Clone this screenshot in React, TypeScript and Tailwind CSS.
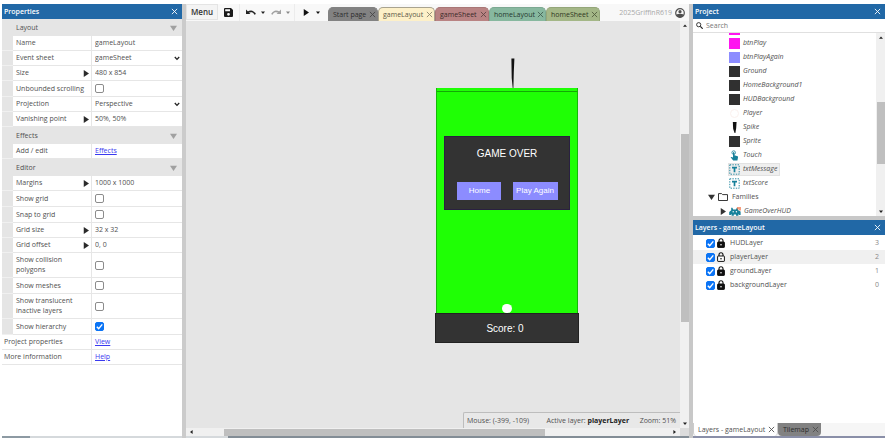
import React from "react";

function CloseIcon({ className = "" }: { className?: string }) {
  return (
    <svg viewBox="0 0 8 8" className={`h-[7px] w-[7px] shrink-0 ${className}`} fill="none" stroke="currentColor" strokeWidth="1">
      <path d="M1 1l6 6M7 1L1 7" />
    </svg>
  );
}

function Triangle({ dir, className = "" }: { dir: "right" | "down" | "left" | "up"; className?: string }) {
  const d = {
    right: "M1 0L8 4L1 8Z",
    down: "M0 1L8 1L4 8Z",
    left: "M7 0L0 4L7 8Z",
    up: "M0 7L8 7L4 1Z",
  }[dir];
  return (
    <svg viewBox="0 0 8 8" preserveAspectRatio="none" className={`shrink-0 ${className}`} fill="currentColor">
      <path d={d} />
    </svg>
  );
}

function PanelHeader({ title }: { title: string }) {
  return (
    <header className="flex h-[15px] shrink-0 items-center justify-between bg-[#2168a6] pr-[4px] pl-[2px] font-semibold text-white">
      <h2>{title}</h2>
      <button aria-label={`Close ${title}`}>
        <CloseIcon />
      </button>
    </header>
  );
}

function CheckBox({ id, checked = false, label }: { id: string; checked?: boolean; label?: string }) {
  return (
    <span className="grid h-[9px] w-[9px] shrink-0">
      <input
        id={id}
        type="checkbox"
        defaultChecked={checked}
        aria-label={label}
        className="peer col-start-1 row-start-1 h-[9px] w-[9px] appearance-none rounded-[2px] border border-[#8c8c8c] bg-white checked:border-[#0b74f5] checked:bg-[#0b74f5]"
      />
      <svg
        viewBox="0 0 9 9"
        className="pointer-events-none invisible col-start-1 row-start-1 h-[9px] w-[9px] peer-checked:visible"
        fill="none"
        stroke="white"
        strokeWidth="1.4"
      >
        <path d="M1.8 4.7l1.9 1.9L7.3 2.4" />
      </svg>
    </span>
  );
}

type Prop = {
  label: string;
  kind: "text" | "select" | "check" | "link";
  value?: string;
  checked?: boolean;
  expand?: boolean;
  tall?: boolean;
};

function PropRow({ prop, indent = true }: { prop: Prop; indent?: boolean }) {
  const id = "prop-" + prop.label.toLowerCase().replace(/[^a-z]+/g, "-");
  const height = prop.tall ? "h-[25px]" : prop.kind === "check" ? "h-[16px]" : "h-[15px]";
  return (
    <div className={`flex ${height}`}>
      {indent && <div className="w-[11px] shrink-0 border-b border-[#f0f0f0] bg-[#e5e5e5]" />}
      <div
        className={`flex shrink-0 items-center justify-between border-r border-b border-[#e6e6e6] pr-[2px] ${
          indent ? "w-[79px] pl-[3px]" : "w-[90px] pl-[2px]"
        }`}
      >
        <label htmlFor={id} className={prop.tall ? "w-[64px] leading-[10px]" : "whitespace-nowrap"}>
          {prop.label}
        </label>
        {prop.expand && (
          <button aria-label={`Expand ${prop.label}`} className="text-[#2a2a2a]">
            <Triangle dir="right" className="h-[7px] w-[6px]" />
          </button>
        )}
      </div>
      <div className="flex min-w-0 flex-1 items-center border-b border-[#e6e6e6] pl-[3px]">
        {prop.kind === "text" && <input id={id} defaultValue={prop.value} className="w-full min-w-0 bg-transparent outline-none" />}
        {prop.kind === "select" && (
          <>
            <select id={id} className="min-w-0 flex-1 appearance-none bg-transparent outline-none">
              <option>{prop.value}</option>
            </select>
            <svg viewBox="0 0 6 5" className="mr-[2px] h-[5px] w-[6px]" fill="none" stroke="#222" strokeWidth="1.3">
              <path d="M0.8 1L3 3.4L5.2 1" />
            </svg>
          </>
        )}
        {prop.kind === "check" && <CheckBox id={id} checked={prop.checked} />}
        {prop.kind === "link" && (
          <a id={id} href="#" className="text-[#3a3af0] underline">
            {prop.value}
          </a>
        )}
      </div>
    </div>
  );
}

const groups: { title: string; props: Prop[] }[] = [
  {
    title: "Layout",
    props: [
      { label: "Name", kind: "text", value: "gameLayout" },
      { label: "Event sheet", kind: "select", value: "gameSheet" },
      { label: "Size", kind: "text", value: "480 x 854", expand: true },
      { label: "Unbounded scrolling", kind: "check" },
      { label: "Projection", kind: "select", value: "Perspective" },
      { label: "Vanishing point", kind: "text", value: "50%, 50%", expand: true },
    ],
  },
  { title: "Effects", props: [{ label: "Add / edit", kind: "link", value: "Effects" }] },
  {
    title: "Editor",
    props: [
      { label: "Margins", kind: "text", value: "1000 x 1000", expand: true },
      { label: "Show grid", kind: "check" },
      { label: "Snap to grid", kind: "check" },
      { label: "Grid size", kind: "text", value: "32 x 32", expand: true },
      { label: "Grid offset", kind: "text", value: "0, 0", expand: true },
      { label: "Show collision polygons", kind: "check", tall: true },
      { label: "Show meshes", kind: "check" },
      { label: "Show translucent inactive layers", kind: "check", tall: true },
      { label: "Show hierarchy", kind: "check", checked: true },
    ],
  },
];

function PropertiesPanel() {
  return (
    <aside className="flex w-[180px] shrink-0 flex-col bg-white">
      <PanelHeader title="Properties" />
      {groups.map((g) => (
        <section key={g.title}>
          <div className="flex h-[17px] items-center justify-between bg-[#e5e5e5] pr-[5px] pl-[14px]">
            <h3>{g.title}</h3>
            <button aria-label={`Collapse ${g.title}`} className="text-[#a0a0a0]">
              <Triangle dir="down" className="h-[6px] w-[7px]" />
            </button>
          </div>
          {g.props.map((p) => (
            <PropRow key={p.label} prop={p} />
          ))}
        </section>
      ))}
      <PropRow indent={false} prop={{ label: "Project properties", kind: "link", value: "View" }} />
      <PropRow indent={false} prop={{ label: "More information", kind: "link", value: "Help" }} />
      <div className="mt-auto h-[2px] bg-[#d5d9dc]">
        <div className="h-full w-[28px] bg-[#8d9aa3]" />
      </div>
    </aside>
  );
}

const tabs = [
  { name: "Start page", cls: "w-[50px] bg-[#828282] border-[#828282] text-[#2c2c2c]" },
  { name: "gameLayout", cls: "w-[57px] bg-[#fdf0c8] border-[#a9a38f] text-[#5c5848]" },
  { name: "gameSheet", cls: "w-[54px] bg-[#b98383] border-[#a87676] text-[#3a2a2a]" },
  { name: "homeLayout", cls: "w-[57px] bg-[#87b89f] border-[#7ba891] text-[#26382f]" },
  { name: "homeSheet", cls: "w-[54px] bg-[#a4b787] border-[#94a679] text-[#30381f]" },
];

function Toolbar() {
  return (
    <div className="flex h-[17px] shrink-0 bg-[#f8f8f8]">
      <button className="h-[16px] w-[32px] shrink-0 border border-[#e4e4e4] bg-[#f4f4f4] text-[8px] leading-[14px] font-semibold text-[#333]">
        Menu
      </button>
      <button aria-label="Save" className="flex w-[22px] shrink-0 items-center justify-center border-r border-[#ececec] text-[#1a1a1a]">
        <svg viewBox="0 0 9 9" className="h-[9px] w-[9px]" fill="currentColor" fillRule="evenodd">
          <path d="M1 0H7L9 2V8Q9 9 8 9H1Q0 9 0 8V1Q0 0 1 0ZM1.2 1.2V3.2H6V1.2ZM4.5 4.9A1.4 1.4 0 1 0 4.5 7.7A1.4 1.4 0 1 0 4.5 4.9Z" />
        </svg>
      </button>
      <div className="flex w-[55px] shrink-0 items-center border-r border-[#ececec] pl-[6px]">
        <button aria-label="Undo" className="text-[#222]">
          <svg viewBox="0 0 10 7" className="h-[7px] w-[10px]" fill="none" stroke="currentColor" strokeWidth="1.6">
            <path d="M1.6 3.4Q6.8 0.6 9.2 5.4" />
            <path d="M0 0.6V5H4.4Z" fill="currentColor" stroke="none" />
          </svg>
        </button>
        <button aria-label="Undo history" className="ml-[5px] text-[#222]">
          <Triangle dir="down" className="h-[3px] w-[4px]" />
        </button>
        <button aria-label="Redo" className="ml-[6px] text-[#a0a0a0]">
          <svg viewBox="0 0 10 7" className="h-[7px] w-[10px]" fill="none" stroke="currentColor" strokeWidth="1.6">
            <path d="M8.4 3.4Q3.2 0.6 0.8 5.4" />
            <path d="M10 0.6V5H5.6Z" fill="currentColor" stroke="none" />
          </svg>
        </button>
        <button aria-label="Redo history" className="ml-[5px] text-[#888]">
          <Triangle dir="down" className="h-[3px] w-[4px]" />
        </button>
      </div>
      <div className="flex w-[33px] shrink-0 items-center pl-[8px] text-[#111]">
        <button aria-label="Preview">
          <Triangle dir="right" className="h-[7px] w-[6px]" />
        </button>
        <button aria-label="Preview options" className="ml-[7px]">
          <Triangle dir="down" className="h-[3px] w-[4px]" />
        </button>
      </div>
      <nav className="flex shrink-0 items-end">
        {tabs.map((t) => (
          <div
            key={t.name}
            className={`flex h-[14px] items-center justify-between rounded-t-[5px] border border-b-0 pr-px pl-[4px] ${t.cls}`}
          >
            <button className="whitespace-nowrap">{t.name}</button>
            <button aria-label={`Close ${t.name}`} className="opacity-70">
              <CloseIcon />
            </button>
          </div>
        ))}
      </nav>
      <div className="ml-auto flex items-center gap-[3px] pr-[4px] text-[#a8a8a8]">
        <span>2025GriffinR619</span>
        <svg viewBox="0 0 10 10" className="h-[10px] w-[10px]">
          <circle cx="5" cy="5" r="4.3" fill="#f8f8f8" stroke="#505050" strokeWidth="1.2" />
          <circle cx="5" cy="3.7" r="1.6" fill="#505050" />
          <path d="M1.2 6.4Q5 5.2 8.8 6.4Q7.6 9.4 5 9.4Q2.4 9.4 1.2 6.4Z" fill="#505050" />
        </svg>
      </div>
    </div>
  );
}

function Stage() {
  return (
    <div className="absolute top-[37px] left-[249px] flex w-[144px] flex-col items-center font-['Liberation_Sans',sans-serif] text-white">
      <svg viewBox="0 0 4 30" className="ml-[12px] h-[30px] w-[4px]">
        <path d="M0.4 0.4H3.4L2.8 14L2.4 30H1.7L0.7 20Z" fill="#111" />
      </svg>
      <div className="flex h-[225px] w-[142px] flex-col border-x border-[#15b808] bg-[#1fff05]">
        <div className="h-[4px] border-b border-[#13a806]" />
        <div className="mx-[7px] mt-[44px] h-[74px] border border-[#2a2040] bg-[#333]">
          <p className="mt-[10px] text-center text-[10px] leading-[14px]">GAME OVER</p>
          <div className="mt-[21px] flex justify-center gap-[12px] text-[8px] leading-[18px]">
            <button className="h-[18px] w-[44px] bg-[#8c8cff] pl-[2px]">Home</button>
            <button className="h-[18px] w-[45px] bg-[#8c8cff] whitespace-nowrap">Play Again</button>
          </div>
        </div>
        <div className="mx-auto mt-auto h-[9px] w-[10px] rounded-full bg-white" />
      </div>
      <div className="h-[30px] w-full border border-[#222] bg-[#333] pr-[4px] text-center text-[10px] leading-[29px]">Score: 0</div>
    </div>
  );
}

function LayoutView() {
  return (
    <main className="flex min-w-0 flex-1 flex-col bg-[#e5e5e5]">
      <Toolbar />
      <div className="flex min-h-0 flex-1">
        <div className="relative flex min-w-0 flex-1 flex-col overflow-hidden">
          <Stage />
          <div className="mt-auto ml-auto flex h-[16px] w-[217px] items-center justify-between rounded-tl-[2px] border-t border-l border-[#bdbdbd] bg-[#e8e8e8] pr-[4px] pl-[3px] whitespace-nowrap">
            <span className="mr-[7px]">Mouse: (-399, -109)</span>
            <span>
              Active layer: <b className="text-[#222]">playerLayer</b>
            </span>
            <span>Zoom: 51%</span>
          </div>
        </div>
        <div className="flex w-[9px] shrink-0 flex-col items-center bg-[#f0f0f0] py-[3px] text-[#222]">
          <Triangle dir="up" className="h-[3px] w-[4px]" />
          <div className="mt-[107px] h-[188px] w-[8px] bg-[#bfbfbf]" />
          <Triangle dir="down" className="mt-auto h-[3px] w-[4px]" />
        </div>
      </div>
      <div className="flex h-[8px] shrink-0 items-center bg-[#f0f0f0] text-[#222]">
        <Triangle dir="left" className="ml-[4px] h-[4px] w-[3px]" />
        <div className="ml-[31px] h-[7px] w-[321px] bg-[#bfbfbf]" />
        <Triangle dir="right" className="ml-auto h-[4px] w-[3px]" />
        <div className="ml-[4px] h-full w-[9px] bg-[#dcdcdc]" />
      </div>
      <div className="flex h-[2px] shrink-0">
        <div className="w-[42px] bg-[#d5d9dc]" />
        <div className="flex-1 bg-[#838d96]" />
      </div>
    </main>
  );
}

function TextObjectIcon() {
  return (
    <svg viewBox="0 0 11 11" className="h-[11px] w-[11px]" fill="none" stroke="#16809a">
      <rect x="0.8" y="0.8" width="9.4" height="9.4" strokeDasharray="1.4 1.2" strokeWidth="0.9" />
      <path d="M3 3.6H8M5.5 3.4V8.2" strokeWidth="1.7" />
    </svg>
  );
}

function TouchIcon() {
  return (
    <svg viewBox="0 0 11 11" className="h-[11px] w-[11px]" fill="#16809a">
      <circle cx="4.7" cy="2.6" r="1.8" fill="none" stroke="#16809a" strokeWidth="0.8" />
      <path d="M4 2.5Q4.7 1.6 5.4 2.5V5.3L8.6 6.2Q9.3 6.5 9 7.4L8.4 10.6H4.2L1.6 7.3Q2 6.5 4 7.4Z" />
    </svg>
  );
}

const swatch = "h-[11px] w-[11px]";
const objects: { name: string; icon: React.ReactNode; selected?: boolean }[] = [
  { name: "btnPlay", icon: <span className={`${swatch} bg-[#ff14f0]`} /> },
  { name: "btnPlayAgain", icon: <span className={`${swatch} bg-[#8c8cff]`} /> },
  { name: "Ground", icon: <span className={`${swatch} bg-[#303030]`} /> },
  { name: "HomeBackground1", icon: <span className={`${swatch} bg-[#303030]`} /> },
  { name: "HUDBackground", icon: <span className={`${swatch} bg-[#303030]`} /> },
  { name: "Player", icon: <span className="h-[9px] w-[9px] rounded-full border border-[#fbf1ee]" /> },
  {
    name: "Spike",
    icon: (
      <svg viewBox="0 0 5 11" className="h-[11px] w-[5px]" fill="#111">
        <path d="M0.8 0H4.6L4.2 6L3.4 11H2.6L1.2 7Z" />
      </svg>
    ),
  },
  { name: "Sprite", icon: <span className={`${swatch} bg-[#303030]`} /> },
  { name: "Touch", icon: <TouchIcon /> },
  { name: "txtMessage", icon: <TextObjectIcon />, selected: true },
  { name: "txtScore", icon: <TextObjectIcon /> },
];

function ProjectPanel() {
  return (
    <section className="flex h-[212px] shrink-0 flex-col bg-white">
      <PanelHeader title="Project" />
      <div className="flex h-[14px] shrink-0 items-center gap-[3px] border-b border-[#e0e0e0] pl-[3px]">
        <svg viewBox="0 0 7 7" className="h-[7px] w-[7px]" fill="none" stroke="#222">
          <circle cx="2.7" cy="2.7" r="2.1" strokeWidth="0.9" />
          <path d="M4.3 4.3L6.7 6.7" strokeWidth="1.2" />
        </svg>
        <input type="search" aria-label="Search project" placeholder="Search" className="min-w-0 flex-1 bg-transparent outline-none placeholder:text-[#777]" />
      </div>
      <div className="flex min-h-0 flex-1">
        <ul className="min-w-0 flex-1 overflow-hidden">
          <li className="h-[3px] pl-[36px]">
            <span className="block h-[2px] w-[11px] bg-[#ff14f0]" />
          </li>
          {objects.map((o) => (
            <li key={o.name} className="flex h-[14px] items-center pl-[35px]">
              <span className={`flex h-[13px] items-center gap-[3px] border pr-[2px] italic ${o.selected ? "border-[#e2e2e2] bg-[#efefef]" : "border-transparent"}`}>
                <span className="flex w-[11px] justify-center">{o.icon}</span>
                {o.name}
              </span>
            </li>
          ))}
          <li className="flex h-[14px] items-center pl-[15px]">
            <Triangle dir="down" className="h-[6px] w-[7px] text-[#333]" />
            <svg viewBox="0 0 10 8" className="mr-[4px] ml-[3px] h-[8px] w-[10px]" fill="none" stroke="#222" strokeWidth="0.9">
              <path d="M0.5 7.5V0.6H3.6L4.6 1.6H9.5V7.5Z" />
            </svg>
            Families
          </li>
          <li className="flex h-[14px] items-center pl-[27px] italic">
            <Triangle dir="right" className="h-[7px] w-[6px] text-[#333]" />
            <svg viewBox="0 0 12 9" className="mr-[3px] ml-[3px] h-[9px] w-[12px]" fill="#16809a">
              <path d="M2.2 0.8H3.4L4.2 2.4H7L7.8 0.8H8.6L9.2 3.2L11.6 4.6V8H10.2L9.4 7V8.8H7V7.6H4.8V8.8H2.6V7L1.6 8H0.2V5L2.2 3.2Z" />
              <circle cx="4.2" cy="4.7" r="0.7" fill="white" />
              <circle cx="7.4" cy="4.7" r="0.7" fill="white" />
              <path d="M9 0V2.4M11 0V3.4" stroke="#f26a3a" strokeWidth="1.3" />
            </svg>
            GameOverHUD
          </li>
        </ul>
        <div className="flex w-[9px] shrink-0 flex-col items-center bg-[#f0f0f0] py-[3px] text-[#222]">
          <Triangle dir="up" className="h-[3px] w-[4px]" />
          <div className="mt-[63px] h-[62px] w-[8px] bg-[#bfbfbf]" />
          <Triangle dir="down" className="mt-auto h-[3px] w-[4px]" />
        </div>
      </div>
    </section>
  );
}

const layers = [
  { name: "HUDLayer", index: 3, locked: true },
  { name: "playerLayer", index: 2, locked: false },
  { name: "groundLayer", index: 1, locked: true },
  { name: "backgroundLayer", index: 0, locked: true },
];

function LayersPanel() {
  return (
    <section className="flex min-h-0 flex-1 flex-col bg-white">
      <PanelHeader title="Layers - gameLayout" />
      <ul className="pt-px">
        {layers.map((l) => (
          <li key={l.name} className={`flex h-[14px] items-center pr-[6px] pl-[13px] ${l.locked ? "" : "bg-[#f0f0f0]"}`}>
            <CheckBox id={`layer-${l.name}`} checked />
            <button aria-label={`Lock ${l.name}`} className="mr-[5px] ml-[2px]">
              <svg viewBox="0 0 8 10" className="h-[10px] w-[8px]" fill="none" stroke="#111">
                <path d="M2 4V2.7Q2 0.7 4 0.7Q6 0.7 6 2.7V4" strokeWidth="1.1" />
                <rect x="0.6" y="4" width="6.8" height="5.4" rx="0.5" fill={l.locked ? "#111" : "white"} strokeWidth="1" />
                <circle cx="4" cy="6.7" r="0.8" fill={l.locked ? "white" : "#111"} stroke="none" />
              </svg>
            </button>
            <label htmlFor={`layer-${l.name}`}>{l.name}</label>
            <span className="ml-auto text-[#888]">{l.index}</span>
          </li>
        ))}
      </ul>
      <div className="mt-auto flex h-[13px] shrink-0 bg-[#f6f6f6]">
        <div className="flex w-[85px] items-center justify-between rounded-b-[4px] border-x border-[#ccc] bg-white pr-[2px] pl-[4px] whitespace-nowrap">
          <button>Layers - gameLayout</button>
          <button aria-label="Close Layers">
            <CloseIcon />
          </button>
        </div>
        <div className="flex w-[43px] items-center justify-between rounded-b-[4px] bg-[#828282] pr-[2px] pl-[5px] text-[#2c2c2c]">
          <button>Tilemap</button>
          <button aria-label="Close Tilemap" className="opacity-60">
            <CloseIcon />
          </button>
        </div>
      </div>
      <div className="h-[2px] shrink-0 bg-[#8a8fa8]" />
    </section>
  );
}

export default function App() {
  return (
    <div className="flex h-screen bg-white pt-[4px] pr-[5px] pb-[3px] pl-[2px] font-['Open_Sans','Noto_Sans',sans-serif] text-[7px] leading-[10px] text-[#505050]">
      <PropertiesPanel />
      <div className="w-[4px] shrink-0 bg-[#cbcbcb]" />
      <LayoutView />
      <div className="w-[4px] shrink-0 bg-[#c8c8c8]" />
      <aside className="flex w-[192px] shrink-0 flex-col">
        <ProjectPanel />
        <div className="h-[4px] shrink-0 bg-[#c8c8c8]" />
        <LayersPanel />
      </aside>
    </div>
  );
}
